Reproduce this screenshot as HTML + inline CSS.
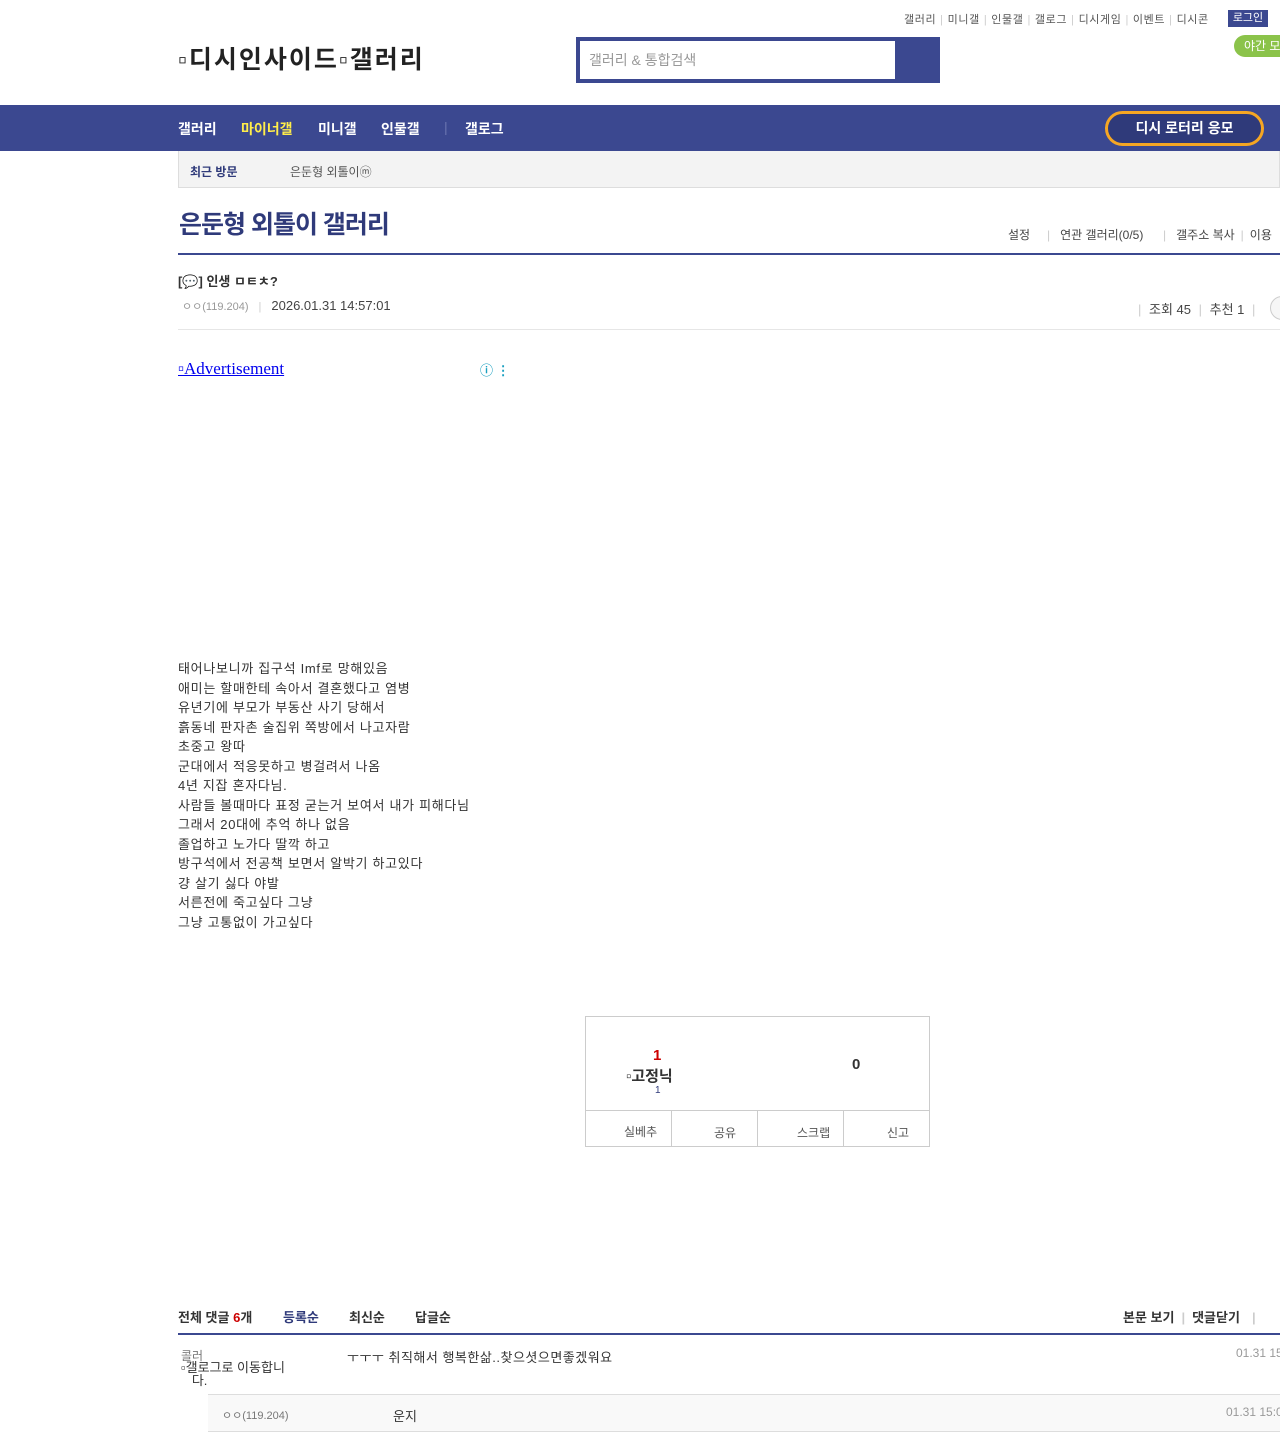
<!DOCTYPE html>
<html><head><meta charset="utf-8"><style>
*{margin:0;padding:0;box-sizing:border-box}
body{width:1280px;height:1440px;overflow:hidden;background:#fff;font-family:"Liberation Sans","Noto Sans CJK KR",sans-serif;color:#333;position:relative}
.a{position:absolute;white-space:nowrap}
.sep{color:#ccc;margin:0 4px}
.n{position:absolute;top:119px;font-size:14px;font-weight:bold;color:#fff;white-space:nowrap}
.c{position:absolute;top:1307px;font-size:13px;font-weight:bold;color:#333;white-space:nowrap}
</style></head><body>
<div class="a" style="left:904px;top:11px;font-size:11px;color:#555;letter-spacing:0.6px">갤러리<span class="sep">|</span>미니갤<span class="sep">|</span>인물갤<span class="sep">|</span>갤로그<span class="sep">|</span>디시게임<span class="sep">|</span>이벤트<span class="sep">|</span>디시콘</div>
<div class="a" style="left:1228px;top:10px;width:40px;height:17px;background:#3b4890;color:#fff;font-size:11px;text-align:center;line-height:17px">로그인</div>
<div class="a" style="left:1234px;top:35px;width:60px;height:22px;background:#8bc34a;border-radius:11px;color:#fff;font-size:12px;line-height:22px;padding-left:10px">야간 모드</div>
<div class="a" style="left:178px;top:40px;font-size:25px;font-weight:bold;color:#222;letter-spacing:2px">▫디시인사이드▫갤러리</div>
<div class="a" style="left:576px;top:37px;width:364px;height:46px;background:#3b4890"></div>
<div class="a" style="left:580px;top:41px;width:315px;height:38px;background:#fff;font-size:14px;color:#999;line-height:38px;padding-left:9px">갤러리 &amp; 통합검색</div>
<div class="a" style="left:0;top:105px;width:1280px;height:46px;background:#3b4890"></div>
<div class="n" style="left:178px">갤러리</div>
<div class="n" style="left:241px;color:#ffed4a">마이너갤</div>
<div class="n" style="left:318px">미니갤</div>
<div class="n" style="left:381px">인물갤</div>
<div class="n" style="left:444px;color:#6a74b0;font-weight:normal">|</div>
<div class="n" style="left:465px">갤로그</div>
<div class="a" style="left:1105px;top:111px;width:159px;height:35px;border:3px solid #f5a623;border-radius:18px;background:#2f3a7a;color:#fff;font-size:14px;font-weight:bold;text-align:center;line-height:29px">디시 로터리 응모</div>
<div class="a" style="left:178px;top:151px;width:1102px;height:37px;background:#f3f3f3;border:1px solid #ddd;border-top:none"></div>
<div class="a" style="left:190px;top:163px;font-size:12px;font-weight:bold;color:#2f3a7a">최근 방문</div>
<div class="a" style="left:290px;top:163px;font-size:12px;color:#555">은둔형 외톨이ⓜ</div>
<div class="a" style="left:179px;top:205px;font-size:25px;font-weight:bold;color:#2f3a7a;letter-spacing:-1px">은둔형 외톨이 갤러리</div>
<div class="a" style="left:1008px;top:226px;font-size:12px;color:#444">설정</div>
<div class="a" style="left:1047px;top:226px;font-size:12px;color:#444"><span style="color:#ccc">|</span>&nbsp;&nbsp;&nbsp;연관 갤러리(0/5)</div>
<div class="a" style="left:1163px;top:226px;font-size:12px;color:#444"><span style="color:#ccc">|</span>&nbsp;&nbsp;&nbsp;갤주소 복사<span class="sep" style="margin:0 6px">|</span>이용</div>
<div class="a" style="left:178px;top:253px;width:1102px;height:2px;background:#3b4890"></div>
<div class="a" style="left:178px;top:271px;font-size:13px;font-weight:bold;color:#333">[💬] 인생 ㅁㅌㅊ?</div>
<div class="a" style="left:182px;top:298px;font-size:11px;color:#999">ㅇㅇ(119.204)<span class="sep" style="margin:0 10px">|</span><span style="font-size:13px;color:#444">2026.01.31 14:57:01</span></div>
<div class="a" style="left:1134px;top:299px;font-size:13px;color:#444"><span class="sep">|</span> 조회 45 <span class="sep">|</span> 추천 1 <span class="sep">|</span></div>
<div class="a" style="left:1270px;top:296px;width:24px;height:24px;border:1px solid #ccc;border-radius:12px;background:#f6f6f6"></div>
<div class="a" style="left:178px;top:329px;width:1102px;height:1px;background:#e6e6e6"></div>
<div class="a" style="left:178px;top:359px;font-family:'Liberation Serif',serif;font-size:17px;color:#00e;text-decoration:underline">▫Advertisement</div>
<div class="a" style="left:480px;top:360px;font-size:13px;color:#1ba0c0;font-weight:bold">ⓘ ⋮</div>
<div class="a" style="left:178px;top:659px;font-size:13px;line-height:19.5px;color:#333;white-space:pre;letter-spacing:0.7px">태어나보니까 집구석 Imf로 망해있음
애미는 할매한테 속아서 결혼했다고 염병
유년기에 부모가 부동산 사기 당해서
흙동네 판자촌 술집위 쪽방에서 나고자람
초중고 왕따
군대에서 적응못하고 병걸려서 나옴
4년 지잡 혼자다님.
사람들 볼때마다 표정 굳는거 보여서 내가 피해다님
그래서 20대에 추억 하나 없음
졸업하고 노가다 딸깍 하고
방구석에서 전공책 보면서 알박기 하고있다
걍 살기 싫다 야발
서른전에 죽고싶다 그냥
그냥 고통없이 가고싶다</div>
<div class="a" style="left:585px;top:1016px;width:345px;height:131px;border:1px solid #ccc"></div>
<div class="a" style="left:586px;top:1110px;width:343px;height:1px;background:#ccc"></div>
<div class="a" style="left:671px;top:1110px;width:1px;height:37px;background:#ccc"></div>
<div class="a" style="left:757px;top:1110px;width:1px;height:37px;background:#ccc"></div>
<div class="a" style="left:843px;top:1110px;width:1px;height:37px;background:#ccc"></div>
<div class="a" style="left:653px;top:1047px;font-size:15px;font-weight:bold;color:#c00">1</div>
<div class="a" style="left:626px;top:1065px;font-size:15px;font-weight:bold;color:#333">▫고정닉</div>
<div class="a" style="left:655px;top:1085px;font-size:10px;color:#2f3a7a">1</div>
<div class="a" style="left:852px;top:1056px;font-size:15px;font-weight:bold;color:#333">0</div>
<div class="a" style="left:624px;top:1123px;font-size:12px;color:#555">실베추</div>
<div class="a" style="left:714px;top:1124px;font-size:12px;color:#555">공유</div>
<div class="a" style="left:797px;top:1124px;font-size:12px;color:#555">스크랩</div>
<div class="a" style="left:887px;top:1124px;font-size:12px;color:#555">신고</div>
<div class="c" style="left:178px">전체 댓글 <span style="color:#c00">6</span>개</div>
<div class="c" style="left:283px;color:#2f3a7a">등록순</div>
<div class="c" style="left:349px">최신순</div>
<div class="c" style="left:415px">답글순</div>
<div class="c" style="left:1123px">본문 보기<span class="sep" style="margin:0 7px">|</span>댓글닫기<span class="sep" style="margin:0 12px">|</span></div>
<div class="a" style="left:178px;top:1333px;width:1102px;height:2px;background:#3b4890"></div>
<div class="a" style="left:181px;top:1347px;font-size:12px;color:#777">콜러</div>
<div class="a" style="left:181px;top:1361px;font-size:13px;color:#333;line-height:13px">▫갤로그로 이동합니<br>&nbsp;&nbsp;&nbsp;다.</div>
<div class="a" style="left:347px;top:1347px;font-size:13px;color:#333;letter-spacing:0.5px">ㅜㅜㅜ 취직해서 행복한삶..찾으셧으면좋겠워요</div>
<div class="a" style="left:1236px;top:1346px;font-size:12px;color:#999">01.31 15:</div>
<div class="a" style="left:208px;top:1394px;width:1072px;height:38px;background:#f9f9f9;border-top:1px solid #ddd;border-bottom:1px solid #ddd"></div>
<div class="a" style="left:222px;top:1407px;font-size:11px;color:#777">ㅇㅇ(119.204)</div>
<div class="a" style="left:393px;top:1406px;font-size:13px;color:#333">운지</div>
<div class="a" style="left:1226px;top:1405px;font-size:12px;color:#999">01.31 15:0</div>
</body></html>
